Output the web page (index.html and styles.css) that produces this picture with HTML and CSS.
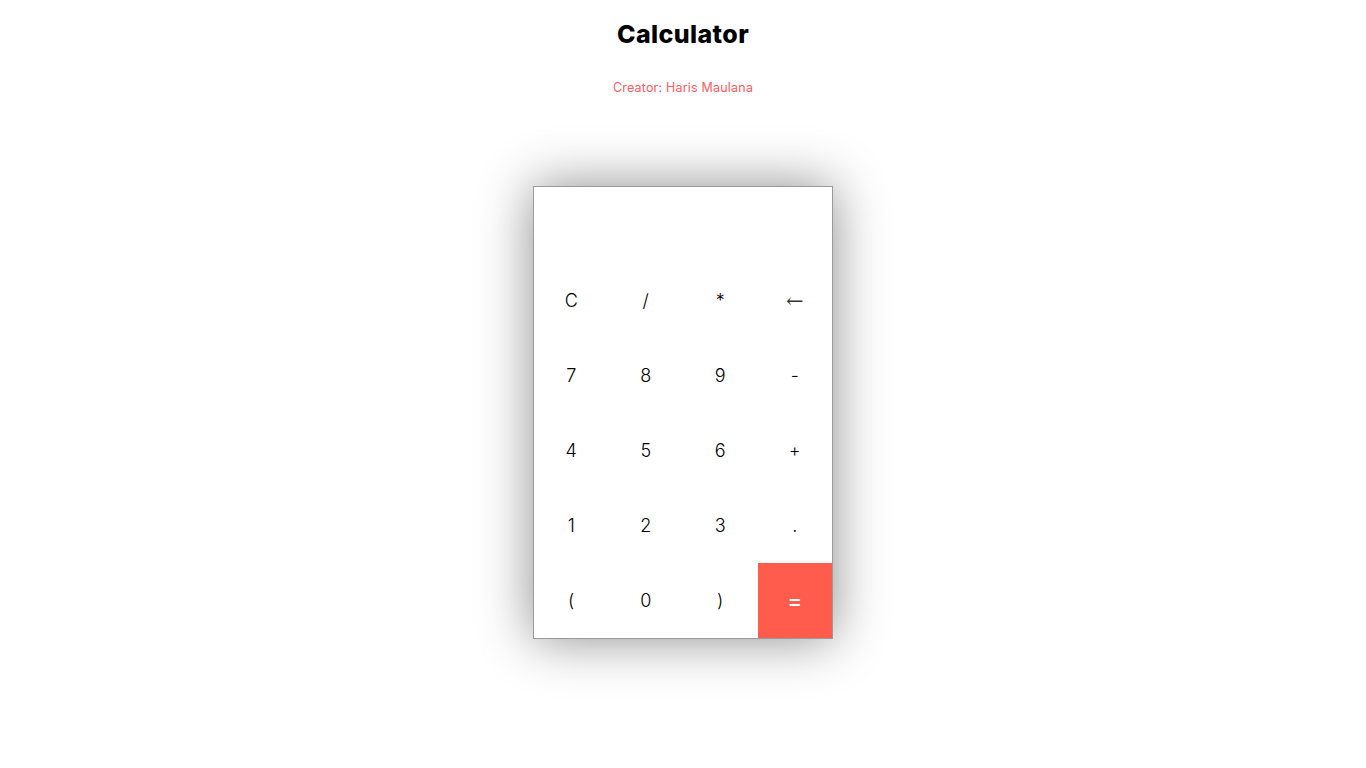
FILE: index.html
```html
<!DOCTYPE html>
<html>
<head>
<meta charset="utf-8">
<link rel="stylesheet" href="styles.css">
</head>
<body>
<h1 class="title">Calculator</h1>
<p class="creator">Creator: Haris Maulana</p>
<div class="calculator">
  <div class="display"></div>
  <div class="keys">
    <button class="key">C</button>
    <button class="key">/</button>
    <button class="key">*</button>
    <button class="key arrow">&#8592;</button>
    <button class="key">7</button>
    <button class="key">8</button>
    <button class="key">9</button>
    <button class="key">-</button>
    <button class="key">4</button>
    <button class="key">5</button>
    <button class="key">6</button>
    <button class="key">+</button>
    <button class="key">1</button>
    <button class="key">2</button>
    <button class="key">3</button>
    <button class="key">.</button>
    <button class="key">(</button>
    <button class="key">0</button>
    <button class="key">)</button>
    <button class="key equals">=</button>
  </div>
</div>
</body>
</html>
```

FILE: styles.css
```css
html, body {
  background: #fff;
}
body {
  margin: 0;
  min-height: 100vh;
  font-family: "Inter", "Open Sans", sans-serif;
  display: flex;
  flex-direction: column;
  align-items: center;
}
.title {
  margin: 19px 0 0;
  font-size: 25px;
  line-height: 30px;
  font-weight: 800;
  color: #000;
  letter-spacing: 0.4px;
}
.creator {
  margin: 31px 0 0;
  font-size: 12.5px;
  line-height: 16px;
  color: #ff5a5f;
  letter-spacing: 0.2px;
}
.calculator {
  margin-top: 90px;
  width: 298px;
  border: 1px solid #9a9a9a;
  background: #fff;
  box-shadow: 0 0 50px rgba(0, 0, 0, 0.45);
}
.display {
  height: 76px;
}
.keys {
  display: grid;
  grid-template-columns: repeat(4, 1fr);
  grid-auto-rows: 75px;
}
.key {
  border: none;
  background: #fff;
  font-family: "Inter", "Open Sans", sans-serif;
  font-size: 18px;
  font-weight: 300;
  color: #000;
  padding: 0;
}
.key.arrow {
  font-family: "DejaVu Serif", serif;
  font-size: 21px;
  color: #333;
}
.key.equals {
  background: #ff5c4d;
  color: #fff;
  font-size: 22px;
  font-weight: 500;
}
```
